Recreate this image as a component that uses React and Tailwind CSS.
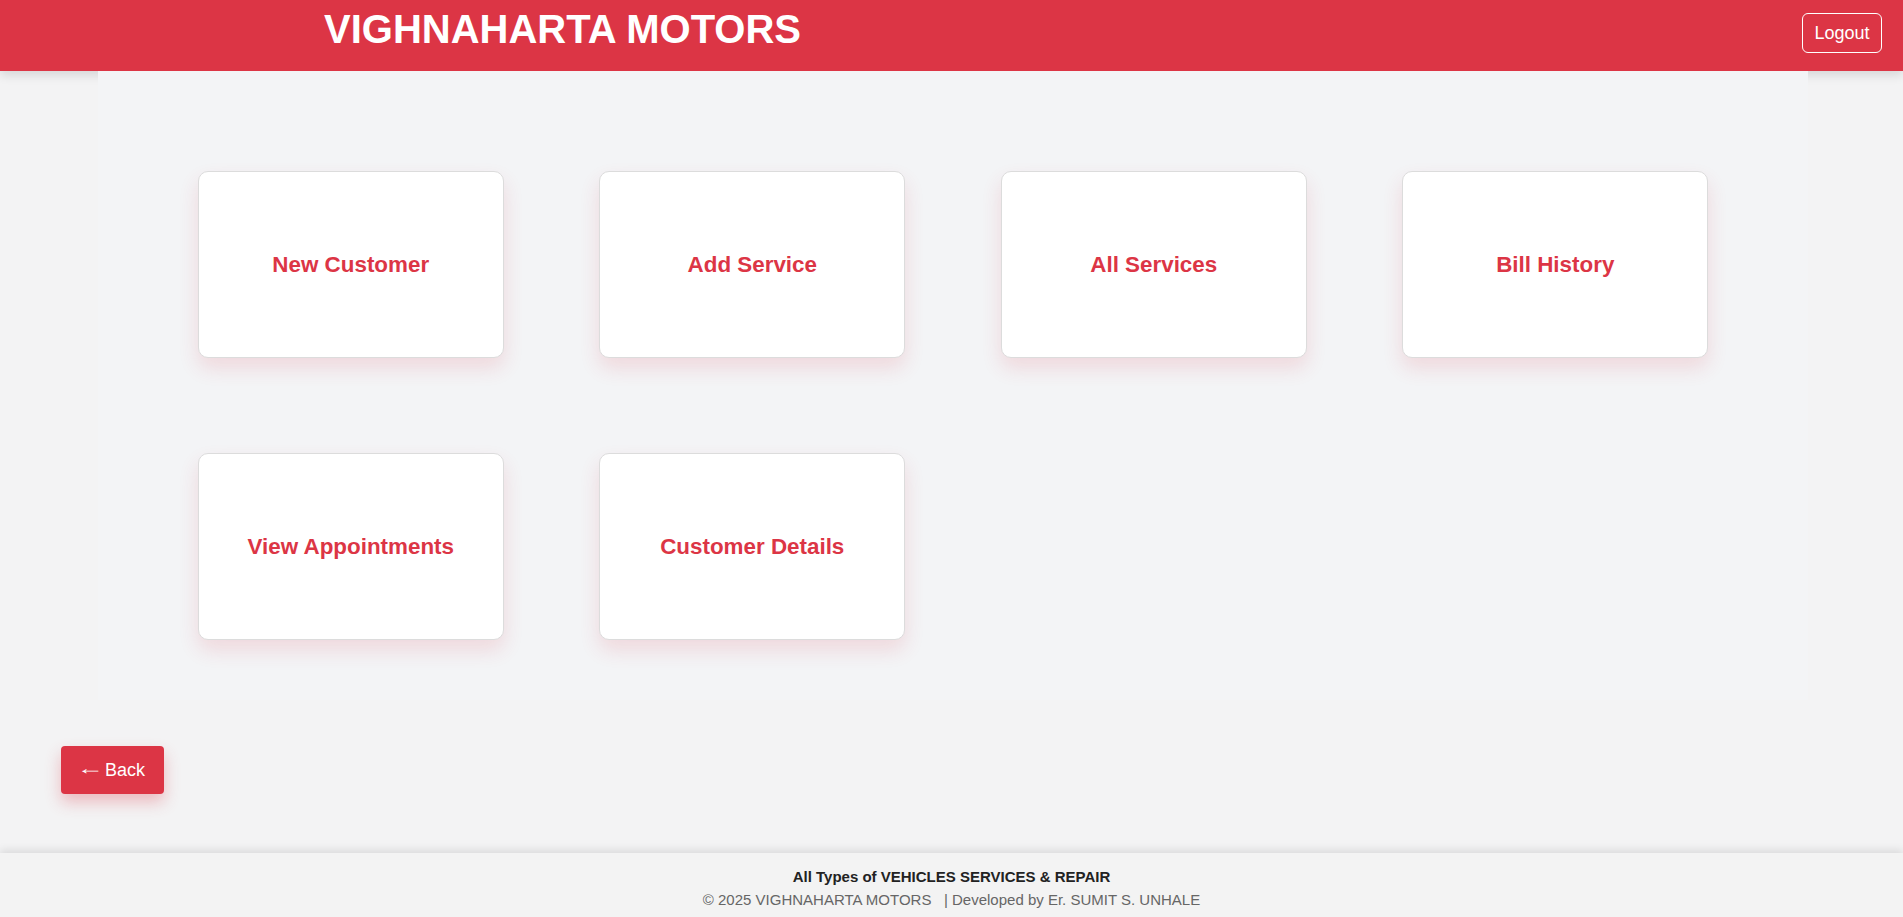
import React from "react";

const CARDS = [
  "New Customer",
  "Add Service",
  "All Services",
  "Bill History",
  "View Appointments",
  "Customer Details",
];

function Header() {
  return (
    <header className="h-[71px] bg-[#dc3545] flex justify-between items-start px-[21px] shadow-[0_4px_10px_rgba(0,0,0,0.12)]">
      <h1 className="ml-[303px] mt-[6px] text-[40px] leading-[1.15] font-bold text-white">
        VIGHNAHARTA MOTORS
      </h1>
      <button className="mt-[13px] h-[40px] w-[80px] border border-white rounded-[6px] text-white text-[18px]">
        Logout
      </button>
    </header>
  );
}

function Card({ label }) {
  return (
    <div className="h-[187px] bg-white border border-[#dcdcdc] rounded-[10px] flex items-center justify-center shadow-[0_10px_20px_rgba(220,53,69,0.14)] cursor-pointer">
      <h3 className="text-[22.4px] font-bold text-[#dc3545]">{label}</h3>
    </div>
  );
}

export default function App() {
  return (
    <div className="min-h-screen bg-[#f3f3f4] flex flex-col font-['Liberation_Sans',Arial,sans-serif]">
      <Header />

      <main className="w-[1710px] ml-[98px] bg-[#f3f4f6] pt-[100px] pb-[60px]">
        <div className="grid grid-cols-[repeat(4,306px)] justify-center gap-x-[95.5px] gap-y-[95px]">
          {CARDS.map((c) => (
            <Card key={c} label={c} />
          ))}
        </div>
      </main>

      <div className="pl-[61px] mt-[46px]">
        <button className="h-[48px] pl-[19px] pr-[19px] bg-[#dc3545] text-white text-[18px] rounded-[4px] shadow-[0_8px_16px_rgba(220,53,69,0.3)]">
          <span className="inline-block w-[20px] text-center scale-x-[1.5] -translate-y-[2px]">←</span> Back
        </button>
      </div>

      <footer className="mt-auto bg-[#f3f3f3] text-center pt-[12px] pb-[6px] leading-[23px] text-[15px] shadow-[0_-3px_8px_rgba(0,0,0,0.1)]">
        <p className="font-bold text-[#222]">All Types of VEHICLES SERVICES &amp; REPAIR</p>
        <p className="text-[#666]">© 2025 VIGHNAHARTA MOTORS {"\u00a0\u00a0"}| Developed by Er. SUMIT S. UNHALE</p>
      </footer>
    </div>
  );
}
